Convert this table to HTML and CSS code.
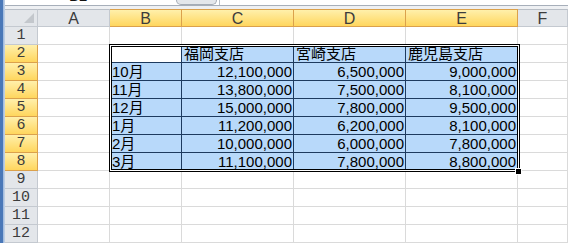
FILE: index.html
```html
<!DOCTYPE html>
<html lang="ja">
<head>
  <meta charset="UTF-8">
  <title>支店別売上</title>
  <link rel="stylesheet" href="styles.css">
</head>
<body>
<div class="window">
  <div class="edge"></div>
  <div class="main">
    <!-- 名前ボックスと数式バーの下端 -->
    <div class="bar">
      <div class="namebox"><span>B2</span></div>
      <div class="grip"></div>
      <div class="formula"></div>
    </div>

    <div class="sheet">
      <div class="hd corner"></div>
      <div class="hd">A</div>
      <div class="hd sel">B</div>
      <div class="hd sel">C</div>
      <div class="hd sel">D</div>
      <div class="hd sel">E</div>
      <div class="hd">F</div>

      <div class="rh">1</div>
      <div class="c"></div><div class="c"></div><div class="c"></div><div class="c"></div><div class="c"></div><div class="c"></div>

      <div class="rh sel">2</div>
      <div class="c"></div>
      <div class="c t active"></div>
      <div class="c t s">福岡支店</div>
      <div class="c t s">宮崎支店</div>
      <div class="c t s">鹿児島支店</div>
      <div class="c"></div>

      <div class="rh sel">3</div>
      <div class="c"></div>
      <div class="c t s">10月</div>
      <div class="c t s n">12,100,000</div>
      <div class="c t s n">6,500,000</div>
      <div class="c t s n">9,000,000</div>
      <div class="c"></div>

      <div class="rh sel">4</div>
      <div class="c"></div>
      <div class="c t s">11月</div>
      <div class="c t s n">13,800,000</div>
      <div class="c t s n">7,500,000</div>
      <div class="c t s n">8,100,000</div>
      <div class="c"></div>

      <div class="rh sel">5</div>
      <div class="c"></div>
      <div class="c t s">12月</div>
      <div class="c t s n">15,000,000</div>
      <div class="c t s n">7,800,000</div>
      <div class="c t s n">9,500,000</div>
      <div class="c"></div>

      <div class="rh sel">6</div>
      <div class="c"></div>
      <div class="c t s">1月</div>
      <div class="c t s n">11,200,000</div>
      <div class="c t s n">6,200,000</div>
      <div class="c t s n">8,100,000</div>
      <div class="c"></div>

      <div class="rh sel">7</div>
      <div class="c"></div>
      <div class="c t s">2月</div>
      <div class="c t s n">10,000,000</div>
      <div class="c t s n">6,000,000</div>
      <div class="c t s n">7,800,000</div>
      <div class="c"></div>

      <div class="rh sel">8</div>
      <div class="c"></div>
      <div class="c t s">3月</div>
      <div class="c t s n">11,100,000</div>
      <div class="c t s n">7,800,000</div>
      <div class="c t s n">8,800,000</div>
      <div class="c"></div>

      <div class="rh">9</div>
      <div class="c"></div><div class="c"></div><div class="c"></div><div class="c"></div><div class="c"></div><div class="c"></div>
      <div class="rh">10</div>
      <div class="c"></div><div class="c"></div><div class="c"></div><div class="c"></div><div class="c"></div><div class="c"></div>
      <div class="rh">11</div>
      <div class="c"></div><div class="c"></div><div class="c"></div><div class="c"></div><div class="c"></div><div class="c"></div>
      <div class="rh">12</div>
      <div class="c"></div><div class="c"></div><div class="c"></div><div class="c"></div><div class="c"></div><div class="c"></div>

      <!-- 選択範囲の枠とフィルハンドル -->
      <div class="frame"></div>
      <div class="handle"></div>
    </div>
  </div>
</div>
</body>
</html>
```

FILE: styles.css
```css
html, body {
  margin: 0;
  background: #fff;
}

.window {
  display: flex;
  width: 568px;
  height: 243px;
  overflow: hidden;
  font-family: "Liberation Sans", "Noto Sans CJK JP", sans-serif;
}

.edge {
  width: 5px;
  flex: none;
  background: linear-gradient(to right, #4a78b8 0, #4a78b8 3px, #9ab6dc 3px, #c9d6e6 5px);
}

.main {
  flex: 1;
}

/* 上の帯 */
.bar {
  display: flex;
  height: 6px;
  border-bottom: 3px solid #eef0f3;
  box-shadow: inset 0 -1px 0 #a7afba;
}

.namebox {
  width: 170px;
  height: 5px;
  overflow: hidden;
  background: #fff;
}

.namebox span {
  display: block;
  margin: -12px 0 0 64px;
  font-size: 15px;
  line-height: 16px;
  color: #111;
}

.grip {
  width: 41px;
  height: 5px;
  margin-left: 1px;
  background: #e4e7eb;
  border: 1px solid #a5acb6;
  border-top: none;
  border-radius: 0 0 6px 6px;
  box-sizing: border-box;
}

.formula {
  flex: 1;
  height: 5px;
  margin-left: 2px;
  border-left: 1px solid #b9c0c9;
  background: #fff;
}

/* シート */
.sheet {
  position: relative;
  display: grid;
  grid-template-columns: 33px 72px 72px 112px 112px 112px 50px;
  grid-auto-rows: 18px;
  font-size: 15px;
  line-height: 17px;
}

.hd, .rh {
  box-sizing: border-box;
  background: #e3e6ea;
  border-right: 1px solid #c4c9d0;
  border-bottom: 1px solid #c4c9d0;
  color: #3c3c3c;
  text-align: center;
  font-family: "Liberation Mono", monospace;
  font-size: 15px;
}

.hd {
  border-top: 1px solid #b8bec6;
  font-family: "Liberation Sans", sans-serif;
  font-size: 16px;
}

.hd.sel, .rh.sel {
  background: linear-gradient(#fff0ab, #ffd65e);
  border-color: #dba14c;
}

.corner {
  position: relative;
}

.corner::after {
  content: "";
  position: absolute;
  right: 3px;
  bottom: 3px;
  border-left: 10px solid transparent;
  border-bottom: 10px solid #c3c7cc;
}

.c {
  box-sizing: border-box;
  border-right: 1px solid #dadada;
  border-bottom: 1px solid #dadada;
  padding: 0 2px;
  white-space: nowrap;
  color: #000;
}

.c.t {
  border-color: #1d3a5e;
}

.c.s {
  background: #b8d9fa;
}

.c.n {
  text-align: right;
  padding-right: 1px;
}

.frame {
  position: absolute;
  left: 104px;
  top: 35px;
  width: 411px;
  height: 128px;
  border: 1px solid #000;
  box-sizing: border-box;
  box-shadow: inset 0 0 0 1px #fff, inset 0 0 0 2px #000;
  pointer-events: none;
}

.handle {
  position: absolute;
  left: 510px;
  top: 159px;
  width: 5px;
  height: 5px;
  background: #000;
  border: 1px solid #fff;
}
```
